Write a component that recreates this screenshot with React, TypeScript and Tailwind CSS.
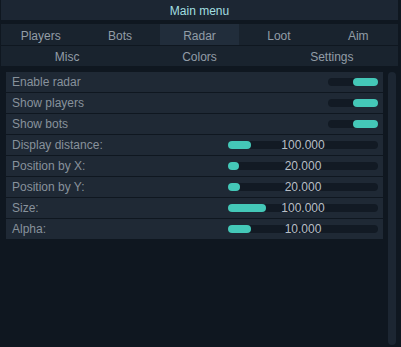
import React from 'react'

const TABS_TOP = ['Players', 'Bots', 'Radar', 'Loot', 'Aim']
const TABS_BOTTOM = ['Misc', 'Colors', 'Settings']

type Row =
    | { kind: 'toggle'; label: string; on: boolean }
    | { kind: 'slider'; label: string; value: string; fill: number }

const ROWS: Row[] = [
    { kind: 'toggle', label: 'Enable radar', on: true },
    { kind: 'toggle', label: 'Show players', on: true },
    { kind: 'toggle', label: 'Show bots', on: true },
    { kind: 'slider', label: 'Display distance:', value: '100.000', fill: 23 },
    { kind: 'slider', label: 'Position by X:', value: '20.000', fill: 11 },
    { kind: 'slider', label: 'Position by Y:', value: '20.000', fill: 12 },
    { kind: 'slider', label: 'Size:', value: '100.000', fill: 38 },
    { kind: 'slider', label: 'Alpha:', value: '10.000', fill: 23 },
]

function Toggle({ on }: { on: boolean }) {
    return (
        <div className="flex h-[8px] w-[50px] rounded-full bg-[#121a24]">
            <div className={`h-full w-[25px] rounded-full bg-[#44c8b8] ${on ? 'ml-auto' : ''}`} />
        </div>
    )
}

function Slider({ value, fill }: { value: string; fill: number }) {
    return (
        <div className="relative h-[8px] w-[150px] rounded-full bg-[#121a24]">
            <div className="h-full rounded-full bg-[#44c8b8]" style={{ width: fill }} />
            <span className="absolute inset-0 flex items-center justify-center text-[12px] leading-none text-[#b8bfc6]">
                {value}
            </span>
        </div>
    )
}

export default function App() {
    return (
        <div
            className="flex h-[347px] w-[401px] flex-col bg-[#0f1720] pl-[1px] pr-[3px]"
            style={{ fontFamily: '"Liberation Sans", Arial, sans-serif' }}
        >
            {/* Title */}
            <div className="flex h-[20px] items-center justify-center bg-[#1c2633] pt-[2px] text-[12px] text-[#a2dfe0]">
                Main menu
            </div>

            {/* Tabs */}
            <div className="mt-[4px] flex flex-col gap-[1px]">
                <div className="grid h-[21px] grid-cols-5 bg-[#19232e]">
                    {TABS_TOP.map((t) => (
                        <div
                            key={t}
                            className={`flex items-center justify-center pt-[2px] text-[12px] text-[#939da7] ${t === 'Radar' ? 'bg-[#212d3b]' : ''}`}
                        >
                            {t}
                        </div>
                    ))}
                </div>
                <div className="grid h-[20px] grid-cols-3 bg-[#19232e]">
                    {TABS_BOTTOM.map((t) => (
                        <div key={t} className="flex items-center justify-center pt-[1px] text-[12px] text-[#939da7]">
                            {t}
                        </div>
                    ))}
                </div>
            </div>

            {/* Content */}
            <div className="mt-[5px] flex flex-1 gap-[5px] pl-[5px] pr-[2px] pb-[2px]">
                <div className="flex w-[377px] flex-col gap-[1px] self-start pt-[1px]">
                    {ROWS.map((r) => (
                        <div key={r.label} className="flex h-[20px] items-center bg-[#1f2935] pl-[6px] pr-[5px]">
                            <span className="flex-1 text-[12px] text-[#88929c]">{r.label}</span>
                            {r.kind === 'toggle' ? (
                                <Toggle on={r.on} />
                            ) : (
                                <Slider value={r.value} fill={r.fill} />
                            )}
                        </div>
                    ))}
                </div>
                <div className="mt-[1px] w-[8px] rounded-full bg-[#1c2632]" />
            </div>
        </div>
    )
}
